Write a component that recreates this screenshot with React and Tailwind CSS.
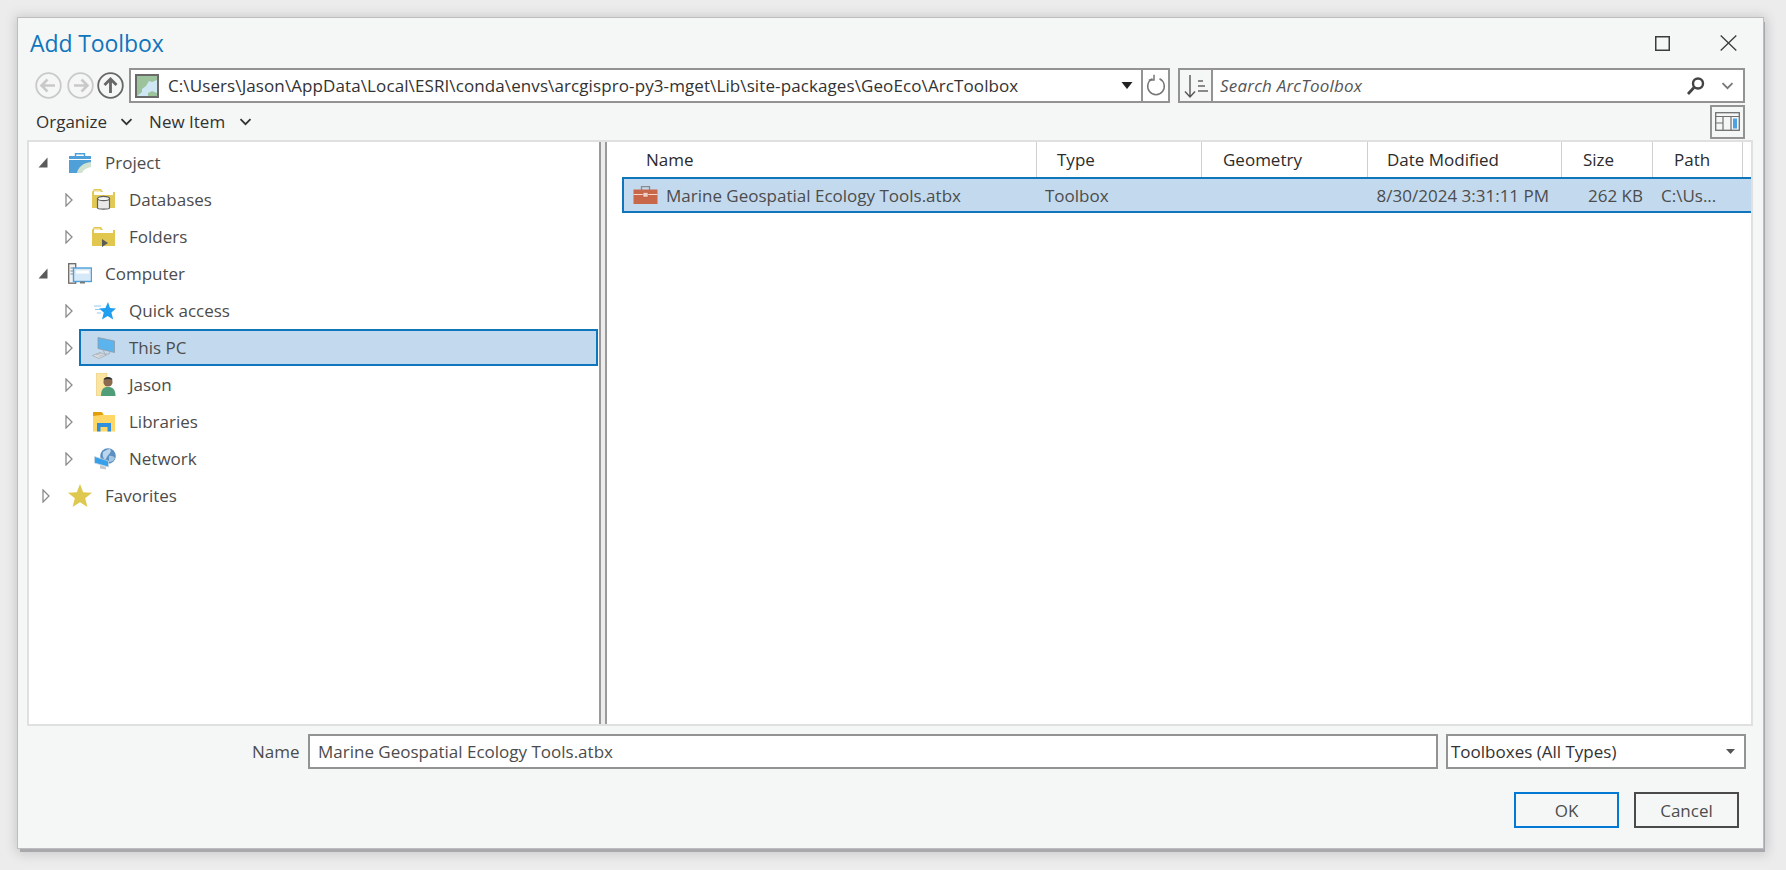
import React from "react";

const FONT = { fontFamily: '"Open Sans","Noto Sans",sans-serif' };

function Expanded() {
  return <svg width="10" height="11" viewBox="0 0 10 11" className="block"><path d="M9.5 0.5V10.5H0.5Z" fill="#5a5a5a" /></svg>;
}
function Collapsed() {
  return <svg width="8" height="14" viewBox="0 0 8 14" className="block"><path d="M1 1L7 7L1 13Z" fill="#fff" stroke="#8c8c8c" strokeWidth="1.3" /></svg>;
}
function ProjectIcon() {
  return (
    <svg width="24" height="20" viewBox="0 0 24 20" className="block">
      <path d="M7.5 3V0.8H16.5V3" fill="none" stroke="#4f9fd8" strokeWidth="1.4" />
      <rect x="1" y="3" width="22" height="17" fill="#4f9fd8" />
      <rect x="1" y="6" width="22" height="1" fill="#fff" />
      <path d="M9 20C10 14 15 10 23 9V20Z" fill="#cfe3d0" />
      <path d="M14 20C15 17 18 15 23 14V20Z" fill="#ffffff" />
    </svg>
  );
}
function DbFolderIcon() {
  return (
    <svg width="23" height="21" viewBox="0 0 23 21" className="block">
      <path d="M0 3V19H23V3H11L9 0H2Z" fill="#e2c957" />
      <rect x="2" y="3" width="19" height="3" fill="#fff" />
      <path d="M2 3H9L8 1.5H2Z" fill="#f7ecc0" />
      <path d="M5.5 9.5V19C5.5 20.5 17.5 20.5 17.5 19V9.5Z" fill="#e9e9e9" stroke="#5f5f5f" strokeWidth="1.2" />
      <ellipse cx="11.5" cy="9.5" rx="6" ry="2.2" fill="#f3f3f3" stroke="#5f5f5f" strokeWidth="1.2" />
    </svg>
  );
}
function FolderIcon() {
  return (
    <svg width="23" height="20" viewBox="0 0 23 20" className="block">
      <path d="M0 3V19H23V3H11L9 0H2Z" fill="#e2c74f" />
      <rect x="2" y="3" width="19" height="3" fill="#fff" />
      <path d="M2 3H9L8 1.5H2Z" fill="#f7ecc0" />
      <path d="M10 12L16 16L10 20Z" fill="#5a5a5a" />
    </svg>
  );
}
function ComputerIcon() {
  return (
    <svg width="24" height="21" viewBox="0 0 24 21" className="block">
      <rect x="0.7" y="0.7" width="7" height="19.5" fill="#f2f2f2" stroke="#6a6a6a" strokeWidth="1.3" />
      <path d="M2.5 5H6M2.5 8H6M2.5 11H6" stroke="#8a8a8a" />
      <rect x="5.5" y="5" width="18" height="13.5" fill="#d6e9f8" stroke="#4f9fd8" strokeWidth="1.4" />
      <rect x="8" y="7.5" width="13" height="3" fill="#ffffff" />
      <path d="M12 18.5V20.5H17V18.5Z" fill="#7a7a7a" />
    </svg>
  );
}
function QuickIcon() {
  return (
    <svg width="22" height="18" viewBox="0 0 22 18" className="ml-[2px] block">
      <path d="M14 0L16 6L22 6.5L17.4 10.6L19.2 17.5L13.6 14L8 17.5L9.8 10.6L5 6.6L11.4 6Z" fill="#1f9ff0" />
      <path d="M0 4H7M1 7.5H6M3 11H7" stroke="#8fcaf2" strokeWidth="1.1" />
    </svg>
  );
}
function PcIcon() {
  return (
    <svg width="24" height="22" viewBox="0 0 24 22" className="block">
      <path d="M6 0.5L22.5 4V15.5L6 11.5Z" fill="#5cb4ee" stroke="#8d9aa5" strokeWidth="0.8" />
      <path d="M11 13L13 17H17L18 15" fill="none" stroke="#a8b0b8" strokeWidth="1" />
      <path d="M0.5 18.5L8 15.5L14.5 18L7 21.5Z" fill="#dde3e8" stroke="#a2a8ad" strokeWidth="0.8" />
      <path d="M4 18L9 16.5M6.5 19.5L11.5 17.8" stroke="#a2a8ad" strokeWidth="0.7" />
    </svg>
  );
}
function JasonIcon() {
  return (
    <svg width="20" height="23" viewBox="0 0 20 23" className="ml-[4px] block">
      <path d="M0.5 0H11V18L4 23H0.5Z" fill="#fbe3a0" stroke="#e8c96e" strokeWidth="0.6" />
      <circle cx="12" cy="9" r="4.6" fill="#8a6a4e" />
      <path d="M7.5 7C8 3 16 3 16.5 7C14 5.5 10 5.5 7.5 7Z" fill="#2c2c2c" />
      <path d="M5 23C5 15 8.5 14 12 14C15.5 14 19.5 15 19.5 23Z" fill="#4f9e78" />
    </svg>
  );
}
function LibrariesIcon() {
  return (
    <svg width="22" height="20" viewBox="0 0 22 20" className="ml-[1px] block">
      <path d="M0 3H22V19.5H0Z" fill="#ffd767" />
      <path d="M0 0H9L11 3H22V5H0Z" fill="#ffd767" />
      <path d="M0 0H8.5L10.5 2.8L0 4Z" fill="#e09f08" />
      <path d="M4 19.5V11H18V19.5H14.5V15H7.5V19.5Z" fill="#2f8fdf" />
    </svg>
  );
}
function NetworkIcon() {
  return (
    <svg width="22" height="22" viewBox="0 0 22 22" className="ml-[2px] block">
      <circle cx="14" cy="8" r="7.8" fill="#5a8fc4" />
      <path d="M9 4C12 2 14 1 16 1C19 4 13 7 12 11C10 12 8 9 9 4Z" fill="#b9d6ea" />
      <path d="M15 8C18 7 20 9 21 10C20 13 17 14 15 14Z" fill="#a3c7df" />
      <path d="M0.5 8.5L14.5 13V19L0.5 15Z" fill="#36a0ea" stroke="#cbd7df" strokeWidth="0.8" />
      <path d="M6 17V20.5L12 21.5V19" fill="#c4c9cd" />
    </svg>
  );
}
function FavIcon() {
  return (
    <svg width="24" height="23" viewBox="0 0 24 23" className="block">
      <path d="M12 0L15.2 8.2L24 8.7L17.2 14.3L19.4 23L12 18.2L4.6 23L6.8 14.3L0 8.7L8.8 8.2Z" fill="#dec84f" />
    </svg>
  );
}
function ToolboxIcon() {
  return (
    <svg width="25" height="18" viewBox="0 0 25 18" className="block">
      <path d="M8.5 4V0.7H16.5V4" fill="none" stroke="#8a8a8a" strokeWidth="1.3" />
      <rect x="0.5" y="3.5" width="24" height="14.5" fill="#c9674a" />
      <rect x="0.5" y="8" width="24" height="1" fill="#f4d9cf" />
      <rect x="10" y="6.5" width="5" height="4.5" fill="#f1cfc3" stroke="#b05a40" strokeWidth="0.5" />
    </svg>
  );
}
function Chevron({ color = "#333" }) {
  return <svg width="13" height="8" viewBox="0 0 13 8" className="block"><path d="M1.5 1.2L6.5 6.2L11.5 1.2" fill="none" stroke={color} strokeWidth="1.8" /></svg>;
}
function NavCircle({ dir, color }) {
  const paths = {
    left: "M20 13.5H7M12.5 7.5L6.5 13.5L12.5 19.5",
    right: "M7 13.5H20M14.5 7.5L20.5 13.5L14.5 19.5",
    up: "M13.5 21V7M7.5 13L13.5 7L19.5 13",
  };
  return (
    <svg width="27" height="27" viewBox="0 0 27 27" className="block">
      <circle cx="13.5" cy="13.5" r="12.3" fill="none" stroke={color} strokeWidth="1.8" />
      <path d={paths[dir]} fill="none" stroke={color} strokeWidth={dir === "up" ? 2.8 : 2.6} />
    </svg>
  );
}
function MapIcon() {
  return (
    <svg width="24" height="24" viewBox="0 0 24 24" className="block">
      <rect x="1" y="1" width="22" height="22" fill="#cfe7f5" stroke="#6a6a6a" strokeWidth="2" />
      <path d="M2 2H22V6L17 8L14 7L11 12L7 15V18L2 22Z" fill="#9cc39c" />
      <path d="M13 22V19L17 17L22 19V22Z" fill="#9cc39c" />
    </svg>
  );
}

const treeRows = [
  { level: 0, open: true, label: "Project", icon: <ProjectIcon /> },
  { level: 1, label: "Databases", icon: <DbFolderIcon /> },
  { level: 1, label: "Folders", icon: <FolderIcon /> },
  { level: 0, open: true, label: "Computer", icon: <ComputerIcon /> },
  { level: 1, label: "Quick access", icon: <QuickIcon /> },
  { level: 1, label: "This PC", icon: <PcIcon />, selected: true },
  { level: 1, label: "Jason", icon: <JasonIcon /> },
  { level: 1, label: "Libraries", icon: <LibrariesIcon /> },
  { level: 1, label: "Network", icon: <NetworkIcon /> },
  { level: 0, label: "Favorites", icon: <FavIcon /> },
];

const columns = [
  { label: "Name", w: "w-[430px]", pl: "pl-[39px]" },
  { label: "Type", w: "w-[165px]", pl: "pl-[20px]" },
  { label: "Geometry", w: "w-[166px]", pl: "pl-[21px]" },
  { label: "Date Modified", w: "w-[194px]", pl: "pl-[19px]" },
  { label: "Size", w: "w-[91px]", pl: "pl-[21px]" },
  { label: "Path", w: "w-[90px]", pl: "pl-[21px]" },
];

function TreeRow({ row }) {
  const lead =
    row.level === 1 ? "w-[50px] pl-[36px]" : row.open ? "w-[26px] pl-[9px]" : "w-[26px] pl-[13px]";
  return (
    <div className="flex h-[37px] items-center">
      <div className={"flex h-full shrink-0 items-center " + lead}>{row.open ? <Expanded /> : <Collapsed />}</div>
      <div
        className={
          "mr-[1px] flex h-full flex-1 items-center border-2 pl-[11px] " +
          (row.selected ? "border-[#0f75bc] bg-[#c3daee]" : "border-transparent")
        }
      >
        <div className="flex w-[37px] shrink-0 items-center">{row.icon}</div>
        <span className="text-[#4c4c4c]">{row.label}</span>
      </div>
    </div>
  );
}

export default function App() {
  return (
    <div
      style={FONT}
      className="h-[870px] w-[1786px] overflow-hidden bg-[#ececec] pl-[18px] pt-[18px] text-[17px] leading-[23px] text-[#323232]"
    >
      <div className="flex h-[830px] w-[1745px] flex-col bg-[#f5f7f6] shadow-[0_0_0_1px_#bdbdc0,2px_4px_0_#a9a9ad,0_0_10px_3px_#cfcfcf,3px_6px_10px_2px_#d9d9d9]">
        {/* title bar */}
        <div className="flex h-[50px] shrink-0 items-center pl-[12px]">
          <span className="text-[23px] leading-[30px] tracking-[-0.1px] text-[#0f75bc]">Add Toolbox</span>
          <div className="ml-auto flex items-center pr-[26px]">
            <svg width="15" height="15" viewBox="0 0 15 15" className="block"><rect x="0.75" y="0.75" width="13.5" height="13.5" fill="none" stroke="#3c3c3c" strokeWidth="1.5" /></svg>
            <svg width="17" height="16" viewBox="0 0 17 16" className="ml-[50px] block"><path d="M0.7 0.5L16.3 15.5M16.3 0.5L0.7 15.5" stroke="#3c3c3c" strokeWidth="1.3" /></svg>
          </div>
        </div>

        {/* navigation row */}
        <div className="flex h-[35px] shrink-0 items-stretch">
          <div className="flex w-[111px] shrink-0 items-center pl-[17px]">
            <NavCircle dir="left" color="#c9c9c9" />
            <span className="w-[5px]" />
            <NavCircle dir="right" color="#c9c9c9" />
            <span className="w-[3px]" />
            <NavCircle dir="up" color="#666666" />
          </div>
          <div className="flex w-[1041px] shrink-0 border-2 border-[#939393] bg-white">
            <div className="flex flex-1 items-center pl-[4px]">
              <MapIcon />
              <span className="ml-[9px] whitespace-nowrap tracking-[0.1px]">C:\Users\Jason\AppData\Local\ESRI\conda\envs\arcgispro-py3-mget\Lib\site-packages\GeoEco\ArcToolbox</span>
              <svg width="12" height="7" viewBox="0 0 12 7" className="ml-auto mr-[8px] block"><path d="M0.5 0H11.5L6 7Z" fill="#222" /></svg>
            </div>
            <div className="flex w-[27px] shrink-0 items-center justify-center border-l-2 border-[#939393]">
              <svg width="20" height="24" viewBox="0 0 20 24" className="block">
                <path d="M6.5 4.8A8.3 8.3 0 1 0 13.5 4.8" fill="none" stroke="#777" strokeWidth="1.5" />
                <path d="M8 0.8V6H2.8" fill="none" stroke="#777" strokeWidth="1.5" />
              </svg>
            </div>
          </div>
          <div className="ml-[8px] flex w-[567px] shrink-0 border-2 border-[#939393] bg-white">
            <div className="flex w-[33px] shrink-0 items-center justify-center border-r-2 border-[#939393] bg-[#f5f7f6]">
              <svg width="26" height="26" viewBox="0 0 26 26" className="block">
                <path d="M7 2V23M2 18.5L7 24L12 18.5" fill="none" stroke="#555" strokeWidth="1.4" />
                <path d="M15 8H20M15 13H22M15 18H25" stroke="#666" strokeWidth="1.4" />
              </svg>
            </div>
            <span className="flex items-center pl-[7px] italic tracking-[0.2px] text-[#555]">Search ArcToolbox</span>
            <svg width="20" height="20" viewBox="0 0 20 20" className="my-auto ml-auto block">
              <circle cx="12" cy="7.5" r="5" fill="none" stroke="#444" strokeWidth="2.4" />
              <path d="M8 11.5L2 18" stroke="#444" strokeWidth="2.8" />
            </svg>
            <span className="my-auto ml-[15px] mr-[9px]"><Chevron color="#777" /></span>
          </div>
        </div>

        {/* toolbar */}
        <div className="flex h-[37px] shrink-0 items-center pl-[18px]">
          <span>Organize</span>
          <span className="ml-[13px]"><Chevron /></span>
          <span className="ml-[16px]">New Item</span>
          <span className="ml-[14px]"><Chevron /></span>
          <div className="ml-auto mr-[18px] flex h-[34px] w-[35px] items-center justify-center border-2 border-[#939393]">
            <svg width="25" height="19" viewBox="0 0 25 19" className="block">
              <rect x="0.7" y="0.7" width="23.6" height="17.6" fill="#f5f7f6" stroke="#6f6f6f" strokeWidth="1.3" />
              <path d="M0.7 4.5H24.3M8 4.5V18.3M16 4.5V18.3M0.7 11H8" stroke="#6f6f6f" strokeWidth="1.2" />
              <rect x="18" y="6.5" width="4" height="10" fill="#4ba3e3" />
            </svg>
          </div>
        </div>

        {/* panes */}
        <div className="ml-[9px] flex h-[586px] w-[1726px] shrink-0 border-2 border-[#e0e0e0] bg-white">
          <div className="flex w-[570px] shrink-0 flex-col pt-[2px]">
            {treeRows.map((row) => <TreeRow key={row.label} row={row} />)}
          </div>
          <div className="w-[8px] shrink-0 border-x-2 border-[#9a9a9a] bg-[#ececec]" />
          <div className="flex min-w-0 flex-1 flex-col">
            <div className="flex h-[35px] shrink-0">
              {columns.map((c) => (
                <div key={c.label} className={"flex h-full shrink-0 items-center border-r border-[#cfcfcf] text-[#2b2b2b] " + c.w + " " + c.pl}>
                  {c.label}
                </div>
              ))}
            </div>
            <div className="ml-[15px] flex h-[36px] shrink-0 items-center border-y-2 border-l-2 border-y-[#0f75bc] border-l-[#0f75bc] bg-[#c3daee] text-[#4c4c4c]">
              <div className="flex w-[421px] shrink-0 items-center pl-[9px]">
                <ToolboxIcon />
                <span className="ml-[8px] whitespace-nowrap">Marine Geospatial Ecology Tools.atbx</span>
              </div>
              <div className="w-[330px] shrink-0">Toolbox</div>
              <div className="w-[174px] shrink-0 text-right whitespace-nowrap">8/30/2024 3:31:11 PM</div>
              <div className="w-[94px] shrink-0 text-right whitespace-nowrap">262 KB</div>
              <div className="pl-[18px] whitespace-nowrap">C:\Us...</div>
            </div>
          </div>
        </div>

        {/* name row */}
        <div className="mt-[8px] flex h-[35px] shrink-0 items-center">
          <span className="ml-[234px] w-[56px] text-[#4c4c4c]">Name</span>
          <div className="flex h-full w-[1130px] shrink-0 items-center border-2 border-[#939393] bg-white pl-[8px] text-[#4c4c4c]">
            Marine Geospatial Ecology Tools.atbx
          </div>
          <div className="ml-[8px] flex h-full w-[300px] shrink-0 items-center border-2 border-[#939393] bg-white pl-[3px]">
            <span>Toolboxes (All Types)</span>
            <svg width="9" height="5" viewBox="0 0 9 5" className="ml-auto mr-[9px] block"><path d="M0 0H9L4.5 5Z" fill="#555" /></svg>
          </div>
        </div>

        {/* buttons */}
        <div className="mt-[23px] flex h-[36px] shrink-0 pl-[1496px]">
          <button className="h-full w-[105px] border-2 border-[#0078d4] text-[#4c4c4c]">OK</button>
          <button className="ml-[15px] h-full w-[105px] border-2 border-[#4a4a4a] text-[#4c4c4c]">Cancel</button>
        </div>
      </div>
    </div>
  );
}
